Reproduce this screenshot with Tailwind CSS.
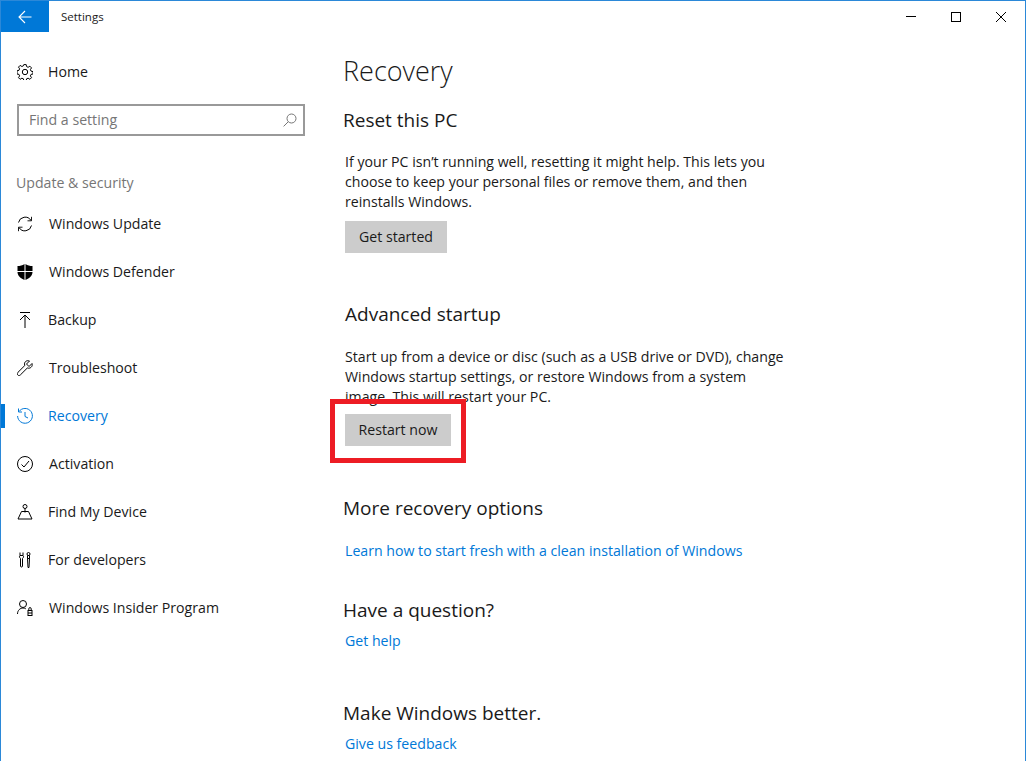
<!DOCTYPE html>
<html lang="en">
<head>
<meta charset="UTF-8">
<title>Settings</title>
<script src="https://cdn.jsdelivr.net/npm/@tailwindcss/browser@4"></script>
</head>
<body class="bg-white overflow-hidden">
<div class="relative w-[1026px] h-[761px] overflow-hidden border-x border-t border-[#2b88d8] font-['Open_Sans','Liberation_Sans',sans-serif] text-[14.15px] text-[#1a1a1a] flex flex-col">

  <!-- title bar -->
  <div class="h-[31px] flex items-center shrink-0">
    <div class="w-[48px] h-[31px] bg-[#0078d7] flex items-center justify-center">
      <svg width="14" height="14" viewBox="0 0 14 14" fill="none" stroke="#fff" stroke-width="1.1"><path d="M1 7h12.500M7 1L1 7l6 6"/></svg>
    </div>
    <span class="ml-3 text-[11.5px]">Settings</span>
    <div class="ml-auto flex items-center h-full pr-[2px]">
      <div class="w-[45px] flex justify-center"><svg width="12" height="12" viewBox="0 0 12 12"><path d="M1 5.500h10" stroke="#000"/></svg></div>
      <div class="w-[45px] flex justify-center"><svg width="12" height="12" viewBox="0 0 12 12"><rect x="1.500" y="1.500" width="9" height="9" fill="none" stroke="#000"/></svg></div>
      <div class="w-[45px] flex justify-center"><svg width="12" height="12" viewBox="0 0 12 12"><path d="M1 1l10 10M11 1L1 11" stroke="#000"/></svg></div>
    </div>
  </div>

  <div class="flex flex-1 min-h-0">
    <!-- sidebar -->
    <aside class="w-[342px] shrink-0 pt-[24px]">
      <div class="h-[32px] pl-[16px] flex items-center gap-[15px]">
        <svg width="16" height="16" viewBox="0 0 16 16" fill="none" stroke="#000"><circle cx="8" cy="8" r="2.700"/><path d="M6.800 .6h2.400l.4 2 1.500.7 1.800-1.100 1.600 1.700-1.100 1.700.6 1.500 2 .5v2.400l-2 .4-.6 1.500 1.100 1.800-1.600 1.600-1.800-1.100-1.500.6-.4 2H6.800l-.4-2-1.500-.6-1.800 1.100-1.600-1.600 1.100-1.800-.6-1.500-2-.4V6.800l2-.5.6-1.500-1.100-1.700 1.600-1.700 1.800 1.100 1.500-.7z"/></svg>
        <span>Home</span>
      </div>
      <div class="ml-[16px] mt-[16px] w-[288px] h-[32px] border-2 border-[#999] flex items-center justify-between pl-[10px] pr-[6px] text-[#767676]">
        <span>Find a setting</span>
        <svg width="14" height="14" viewBox="0 0 14 14" fill="none" stroke="#767676"><circle cx="8.500" cy="5.500" r="4.500"/><path d="M5.200 8.800L.6 13.400"/></svg>
      </div>
      <div class="ml-[15px] mt-[36px] leading-[22px] text-[#767676]">Update &amp; security</div>

      <nav class="mt-[6px]">
        <a class="h-[48px] pl-[16px] flex items-center gap-[16px]">
          <svg class="shrink-0" width="16" height="16" viewBox="0 0 16 16" fill="none" stroke="#000"><path d="M1.500 6.500A6.800 6.800 0 0 1 14 4.500M14.500 9.500A6.800 6.800 0 0 1 2 11.500"/><path d="M14.500 .8v4h-4M1.500 15.200v-4h4" stroke-width=".9"/></svg>
          <span>Windows Update</span>
        </a>
        <a class="h-[48px] pl-[16px] flex items-center gap-[16px]">
          <svg class="shrink-0" width="16" height="16" viewBox="0 0 16 16"><path d="M7.500 0C5.500 1.500 3 2 .5 2v6c0 3.500 3 6.500 7 8zM8.500 0c2 1.500 4.500 2 7 2v6c0 3.500-3 6.500-7 8z"/><path d="M0 7.500h16" stroke="#fff"/></svg>
          <span>Windows Defender</span>
        </a>
        <a class="h-[48px] pl-[16px] flex items-center gap-[15px]">
          <svg class="shrink-0" width="16" height="16" viewBox="0 0 16 16" fill="none" stroke="#000"><path d="M3 .5h10M8 16V3M3 8l5-5 5 5"/></svg>
          <span>Backup</span>
        </a>
        <a class="h-[48px] pl-[16px] flex items-center gap-[16px]">
          <svg class="shrink-0" width="16" height="16" viewBox="0 0 16 16" fill="none" stroke="#000"><path d="M15 3.500l-3 3-2.500-2.500 3-3C10 0 7.500 1.500 7.500 4c0 .6.100 1 .3 1.500L.9 12.400c-.8.800-.8 1.800-.1 2.600.8.800 1.800.7 2.600-.1l6.900-6.900c2.800 1 5.800-1.500 4.700-4.500z"/></svg>
          <span>Troubleshoot</span>
        </a>
        <a class="relative h-[48px] pl-[16px] flex items-center gap-[15px] text-[#0078d7]">
          <span class="absolute left-0 top-[12px] w-[4px] h-[24px] bg-[#0078d7]"></span>
          <svg class="shrink-0" width="16" height="16" viewBox="0 0 16 16" fill="none" stroke="#0078d7"><path d="M2 3.500A7.400 7.400 0 1 1 .6 8"/><path d="M1.500 .5v3.500H5M8 4v4.500l3 1.500"/></svg>
          <span>Recovery</span>
        </a>
        <a class="h-[48px] pl-[16px] flex items-center gap-[16px]">
          <svg class="shrink-0" width="16" height="16" viewBox="0 0 16 16" fill="none" stroke="#000"><circle cx="8" cy="8" r="7.500"/><path d="M4.500 8.500l2.500 2.500 5-6"/></svg>
          <span>Activation</span>
        </a>
        <a class="h-[48px] pl-[16px] flex items-center gap-[15px]">
          <svg class="shrink-0" width="16" height="16" viewBox="0 0 16 16" fill="none" stroke="#000"><circle cx="8" cy="2.500" r="2"/><path d="M8 4.500v4M4.500 7.500h7l3.500 7.500H1z"/></svg>
          <span>Find My Device</span>
        </a>
        <a class="h-[48px] pl-[16px] flex items-center gap-[15px]">
          <svg class="shrink-0" width="16" height="16" viewBox="0 0 16 16" fill="none" stroke="#000"><path d="M3 .5v3h3v-3M3 3.500c-1 1-.5 2 .5 3V14a1 1 0 0 0 2 0V6.500c1-1 1.500-2 .5-3"/><circle cx="11.500" cy="2" r="1.500"/><path d="M10.500 3.500h2v3h-2zM10.500 6.500h2L12 15.500h-1z"/></svg>
          <span>For developers</span>
        </a>
        <a class="h-[48px] pl-[16px] flex items-center gap-[16px]">
          <svg class="shrink-0" width="16" height="16" viewBox="0 0 16 16" fill="none" stroke="#000"><circle cx="6" cy="4" r="3.500"/><path d="M.5 14c0-3.500 2.500-6 5.500-6 1 0 2 .3 2.800.8"/><rect x="11" y="10.500" width="4" height="5"/><path d="M11.800 10.500V8.800a1.200 1.200 0 0 1 2.400 0v1.700M11 13h4"/></svg>
          <span>Windows Insider Program</span>
        </a>
      </nav>
    </aside>

    <!-- main -->
    <main class="flex-1 pt-[20px] leading-[20px]">
      <h1 class="text-[27px] font-light leading-[38px]">Recovery</h1>
      <h2 class="text-[19px] leading-[28px] mt-[16px]">Reset this PC</h2>
      <p class="mt-[18px] ml-[2px]">If your PC isn’t running well, resetting it might help. This lets you<br>choose to keep your personal files or remove them, and then<br>reinstalls Windows.</p>
      <button class="mt-[9px] ml-[2px] h-[32px] w-[102px] bg-[#ccc] block">Get started</button>

      <h2 class="text-[19px] leading-[28px] mt-[47px] ml-[2px]">Advanced startup</h2>
      <p class="mt-[19px] ml-[2px]">Start up from a device or disc (such as a USB drive or DVD), change<br>Windows startup settings, or restore Windows from a system<br>image. This will restart your PC.</p>
      <button class="mt-[7px] ml-[2px] h-[32px] w-[106px] bg-[#ccc] block">Restart now</button>

      <h2 class="text-[19px] leading-[28px] mt-[48px]">More recovery options</h2>
      <a class="block mt-[19px] ml-[2px] text-[#0078d7]">Learn how to start fresh with a clean installation of Windows</a>

      <h2 class="text-[19px] leading-[28px] mt-[35px]">Have a question?</h2>
      <a class="block mt-[7px] ml-[2px] text-[#0078d7]">Get help</a>

      <h2 class="text-[19px] leading-[28px] mt-[48px]">Make Windows better.</h2>
      <a class="block mt-[7px] ml-[2px] text-[#0078d7]">Give us feedback</a>
    </main>
  </div>

  <!-- red annotation round the button -->
  <div class="absolute left-[329px] top-[398px] w-[136px] h-[64px] border-[5px] border-[#ed1c24]"></div>
</div>
</body>
</html>
